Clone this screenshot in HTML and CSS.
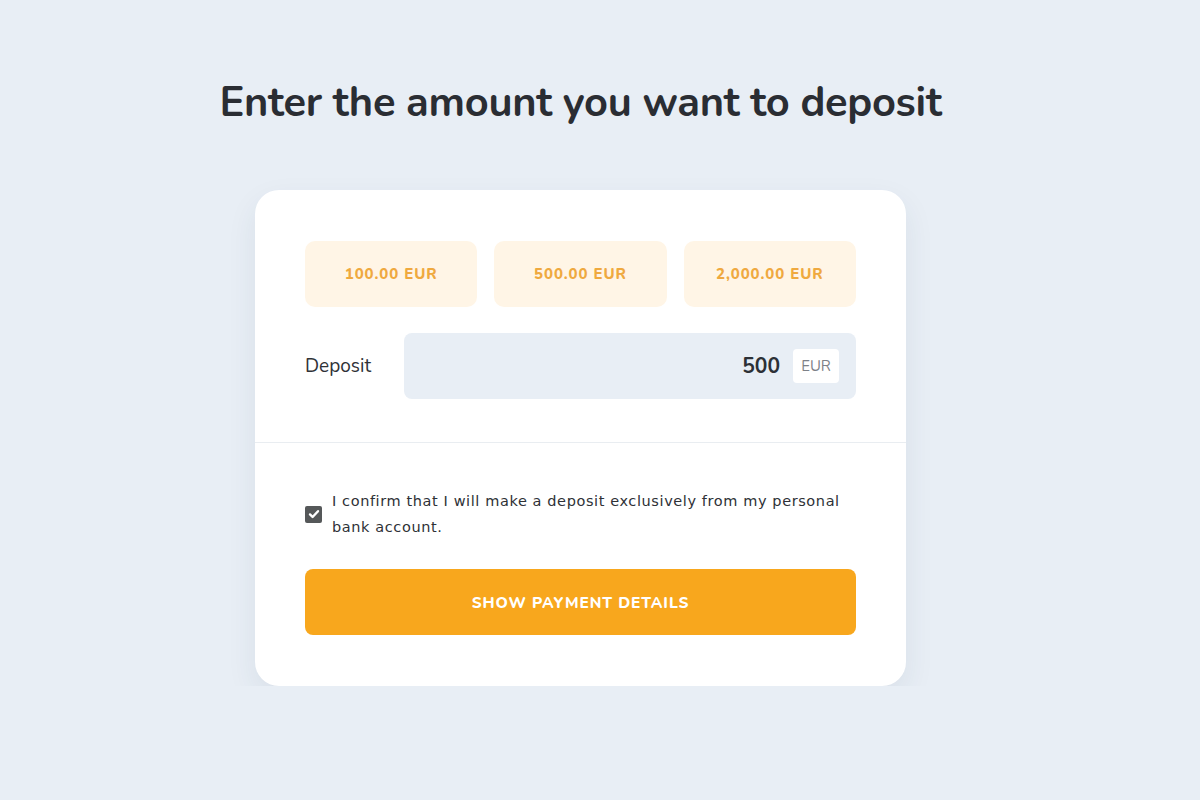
FILE: index.html
```html
<!DOCTYPE html>
<html lang="en">
<head>
  <meta charset="UTF-8" />
  <meta name="viewport" content="width=device-width, initial-scale=1.0"/>
  <title>Deposit</title>
  <link rel="stylesheet" href="styles.css">
</head>
<body>
  <main class="page">
    <h1 class="title">Enter the amount you want to deposit</h1>

    <div class="card">
      <div class="card-top">
        <div class="presets">
          <button class="preset">100.00 EUR</button>
          <button class="preset">500.00 EUR</button>
          <button class="preset">2,000.00 EUR</button>
        </div>
        <div class="deposit-row">
          <label class="deposit-label" for="amount">Deposit</label>
          <div class="amount-field">
            <span class="amount-value" id="amount">500</span>
            <span class="currency">EUR</span>
          </div>
        </div>
      </div>

      <div class="card-bottom">
        <label class="confirm">
          <span class="checkbox">
            <svg width="12" height="12" viewBox="0 0 12 12"><path d="M2 6.4l2.6 2.6L10 3.2" fill="none" stroke="#fff" stroke-width="2.4" stroke-linecap="round" stroke-linejoin="round"/></svg>
          </span>
          <span class="confirm-text">I confirm that I will make a deposit exclusively from my personal bank account.</span>
        </label>
        <button class="submit">Show payment details</button>
      </div>
    </div>
  </main>
</body>
</html>
```

FILE: styles.css
```css
body {
  margin: 0;
  background: #e8eef5;
  font-family: 'Nunito', 'Lato', sans-serif;
  color: #2a2d33;
}
.page {
  display: flex;
  flex-direction: column;
  align-items: center;
  padding: 78px 39px 0 0;
}
.title {
  margin: 0 0 62px;
  font-size: 41.6px;
  font-weight: 700;
  line-height: 50px;
  letter-spacing: -0.3px;
}
.card {
  width: 651px;
  background: #fff;
  border-radius: 24px;
  box-shadow: 0 12px 30px rgba(40, 60, 90, 0.08);
}
.card-top {
  padding: 51px 50px 43px;
  border-bottom: 1px solid #e9edf1;
}
.presets {
  display: grid;
  grid-template-columns: 1fr 1fr 1fr;
  gap: 17px;
}
.preset {
  height: 66px;
  border: none;
  border-radius: 10px;
  background: #fff5e6;
  color: #efa93f;
  font-family: 'Nunito', 'Lato', sans-serif;
  font-size: 15px;
  font-weight: 800;
  letter-spacing: 0.9px;
  cursor: pointer;
}
.deposit-row {
  display: flex;
  align-items: center;
  margin-top: 26px;
}
.deposit-label {
  width: 99px;
  font-size: 19px;
  color: #2f3237;
}
.amount-field {
  flex: 1;
  height: 66px;
  display: flex;
  align-items: center;
  justify-content: flex-end;
  gap: 13px;
  padding: 0 17px;
  background: #e8eef5;
  border-radius: 8px;
}
.amount-value {
  font-size: 21px;
  font-weight: 700;
  color: #2c3036;
}
.currency {
  width: 46px;
  height: 34px;
  display: flex;
  align-items: center;
  justify-content: center;
  background: #fff;
  border-radius: 4px;
  font-size: 15px;
  color: #7d8188;
}
.card-bottom {
  padding: 45px 50px 51px;
}
.confirm {
  display: flex;
  align-items: center;
  gap: 10px;
}
.checkbox {
  flex: none;
  width: 17px;
  height: 17px;
  display: flex;
  align-items: center;
  justify-content: center;
  background: #555859;
  border-radius: 2px;
}
.confirm-text {
  font-family: 'DejaVu Sans', sans-serif;
  font-size: 14.5px;
  letter-spacing: 0.6px;
  line-height: 26px;
  color: #2e3136;
}
.submit {
  display: block;
  width: 100%;
  height: 66px;
  margin-top: 29px;
  border: none;
  border-radius: 8px;
  background: #f8a71d;
  color: #fff;
  font-family: 'Nunito', 'Lato', sans-serif;
  font-size: 15.5px;
  font-weight: 800;
  letter-spacing: 0.9px;
  text-transform: uppercase;
  cursor: pointer;
}
```
